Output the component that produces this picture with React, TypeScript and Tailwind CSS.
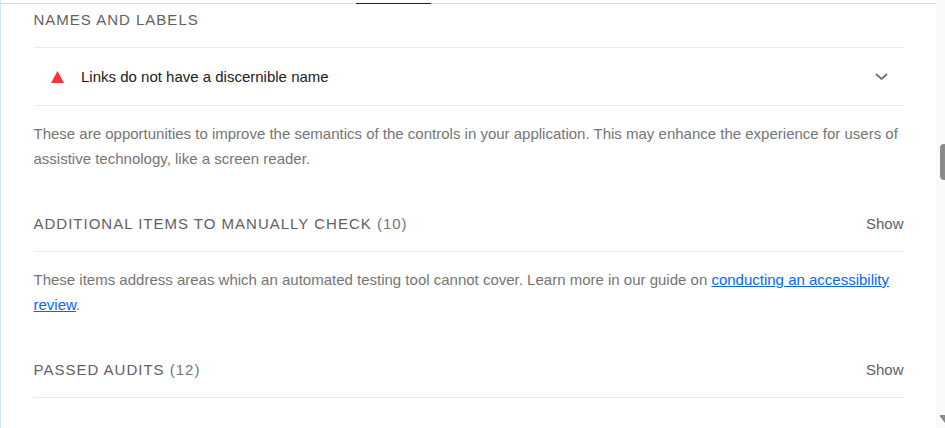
export default function App() {
  const link = "text-[#0667ff] underline";
  return (
    <div className="relative h-[428px] w-[945px] overflow-hidden border-l border-[#d3e3fd] bg-white font-['Liberation_Sans',Arial,sans-serif] text-[15px] leading-[25px] text-[#757575]">
      <div className="h-1 border-b border-[#dadce0]" />
      <div className="absolute left-[355px] top-[3px] h-px w-[75px] bg-[#202124]" />
      <main className="ml-[33px] w-[870px]">
        <h2 className="-ml-[0.5px] pt-[3px] tracking-[1px] text-[#616161]">NAMES AND LABELS</h2>
        <div className="mt-[15px] flex h-[59px] items-center border-y border-[#ebebeb] pl-[17px] text-[#212121]">
          <svg width="13" height="12" viewBox="0 0 13 12"><path d="M6.5 0L13 12H0Z" fill="#f33" /></svg>
          <span className="ml-[17px]">Links do not have a discernible name</span>
          <svg className="ml-auto mr-4" width="13" height="8" viewBox="0 0 13 8"><path d="M1 1L6.5 6L12 1" fill="none" stroke="#757575" strokeWidth="1.9" /></svg>
        </div>
        <p className="-ml-[0.5px] pt-[15px]">These are opportunities to improve the semantics of the controls in your application. This may enhance the experience for users of assistive technology, like a screen reader.</p>
        <div className="mt-10 flex h-[41px] justify-between border-b border-[#ebebeb] text-[#616161]">
          <h2 className="-ml-[0.5px] tracking-[1px]">ADDITIONAL ITEMS TO MANUALLY CHECK <span className="text-[#757575]">(10)</span></h2><span className="mr-[0.5px]">Show</span>
        </div>
        <p className="-ml-[0.5px] pt-[15px]">These items address areas which an automated testing tool cannot cover. Learn more in our guide on <a className={link}>conducting an accessibility review</a>.</p>
        <div className="mt-10 flex h-[41px] justify-between border-b border-[#ebebeb] text-[#616161]">
          <h2 className="-ml-[0.5px] tracking-[1px]">PASSED AUDITS <span className="text-[#757575]">(12)</span></h2><span className="mr-[0.5px]">Show</span>
        </div>
      </main>
      <div className="absolute right-0 top-0 h-full w-[9px] bg-[#fafafa]" />
      <div className="absolute -right-1 top-[144px] h-9 w-[9px] rounded-[4px] bg-[#8b8b8b]" />
      <svg className="absolute bottom-0 right-0" width="6" height="14" viewBox="0 0 6 14"><path d="M1 1H6V9L1 2.5Z" fill="#8b8b8b" /></svg>
    </div>
  );
}
